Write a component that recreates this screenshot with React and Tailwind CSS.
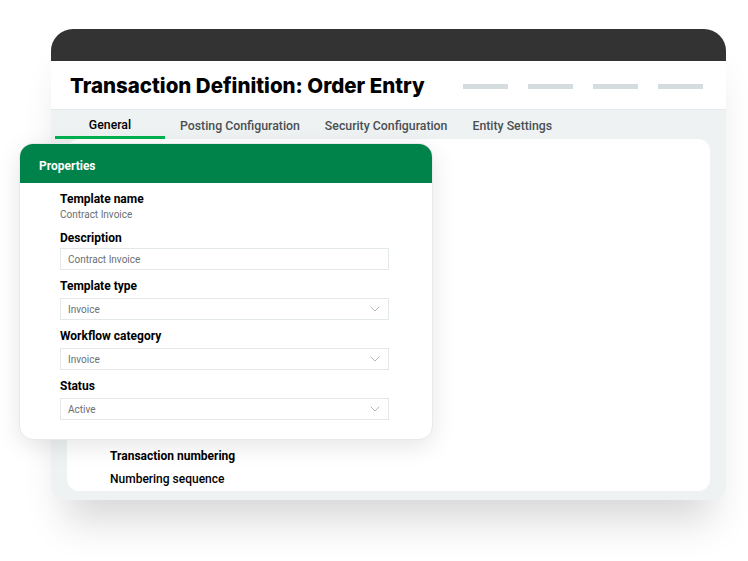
import React from 'react';
import { ChevronDown } from 'lucide-react';

const fields = [
  { label: 'Template type', value: 'Invoice' },
  { label: 'Workflow category', value: 'Invoice' },
  { label: 'Status', value: 'Active' },
];

function Select({ value }) {
  return (
    <div className="mt-[4px] h-[22px] w-[329px] border border-[#e2e7e9] bg-white flex items-center justify-between pl-[7px] pr-[5px]">
      <span className="text-[10px] text-[#6b6f72]">{value}</span>
      <ChevronDown size={16} strokeWidth={1.2} className="text-[#9ca7ad]" />
    </div>
  );
}

export default function App() {
  return (
    <div className="relative w-[748px] h-[561px] bg-white overflow-hidden font-['Roboto',sans-serif] text-black">
      <div className="pt-[29px] pl-[51px]">
        {/* window frame */}
        <div className="w-[675px] rounded-t-[22px] rounded-b-[14px] bg-[#eef2f3] overflow-hidden shadow-[0_34px_40px_-14px_rgba(0,0,0,0.16)]">
          <div className="h-[32px] bg-[#333333]" />
          <div className="h-[49px] bg-white border-b border-[#e4e9eb] flex items-center pl-[19px] pr-[23px]">
            <h1 className="pt-[3px] font-['Inter',sans-serif] text-[20.5px] font-extrabold tracking-normal">Transaction Definition: Order Entry</h1>
            <div className="ml-auto flex gap-[20px] pt-[2px]">
              <div className="w-[45px] h-[5px] bg-[#d5dcdf]" />
              <div className="w-[45px] h-[5px] bg-[#d5dcdf]" />
              <div className="w-[45px] h-[5px] bg-[#d5dcdf]" />
              <div className="w-[45px] h-[5px] bg-[#d5dcdf]" />
            </div>
          </div>

          {/* tabs */}
          <div className="h-[29px] flex items-stretch text-[12.3px] font-medium text-[#4a4f52]">
            <div className="ml-[4px] w-[110px] flex items-center justify-center text-black border-b-[3px] border-[#00b14f] pt-[4px]">General</div>
            <div className="ml-[15px] flex gap-[25px] items-center pt-[4px]">
              <span>Posting Configuration</span>
              <span>Security Configuration</span>
              <span>Entity Settings</span>
            </div>
          </div>

          {/* content */}
          <div className="mx-[16px] h-[352px] bg-white rounded-[12px] pl-[43px] pt-[309px]">
            <p className="text-[12px] font-bold leading-[16px]">Transaction numbering</p>
            <p className="mt-[7px] text-[12px] font-medium leading-[16px]">Numbering sequence</p>
          </div>
          <div className="h-[9px]" />
        </div>
      </div>

      {/* properties card */}
      <div className="absolute left-[19px] top-[143px] w-[414px] h-[297px] bg-white rounded-[14px] overflow-hidden border border-[#e6eaec] shadow-[0_6px_24px_rgba(0,0,0,0.10)]">
        <div className="h-[39px] bg-[#00834a] flex items-center pl-[19px] pt-[5px]">
          <span className="text-[12px] font-bold text-white">Properties</span>
        </div>
        <div className="pl-[40px] pt-[8px]">
          <p className="text-[12px] font-bold leading-[16px]">Template name</p>
          <p className="mt-[1px] text-[10px] leading-[14px] text-[#6b6f72]">Contract Invoice</p>
          <p className="mt-[8px] text-[12px] font-bold leading-[16px]">Description</p>
          <div className="mt-[2px] h-[22px] w-[329px] border border-[#e2e7e9] bg-white flex items-center pl-[7px]">
            <span className="text-[10px] text-[#6b6f72]">Contract Invoice</span>
          </div>
          {fields.map((f) => (
            <div key={f.label} className="mt-[8px]">
              <p className="text-[12px] font-bold leading-[16px]">{f.label}</p>
              <Select value={f.value} />
            </div>
          ))}
        </div>
      </div>
    </div>
  );
}
